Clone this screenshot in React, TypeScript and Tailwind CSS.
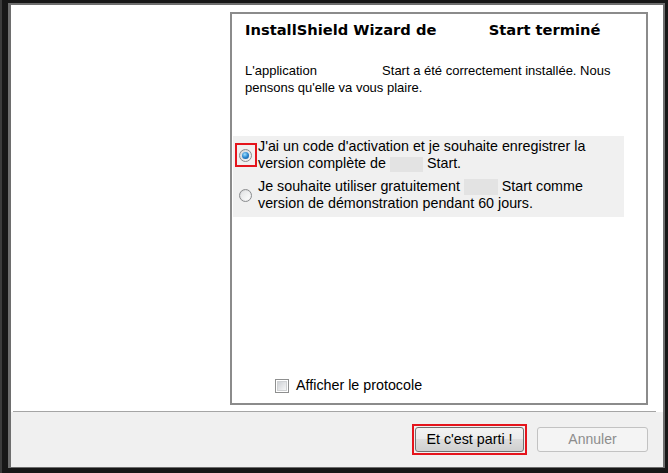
import React from "react";

// ─── Small Win7-style controls ──────────────────────

function Radio({ checked }: { checked?: boolean }) {
  return (
    <div className="flex h-[13px] w-[13px] items-center justify-center rounded-full border border-[#8a8c8e] bg-[linear-gradient(135deg,#d4d6d8,#f7f7f7)]">
      {checked ? (
        <div className="h-[7px] w-[7px] rounded-full bg-[radial-gradient(circle_at_40%_35%,#9fe0ff,#2a86cf_50%,#0c4d8c)]" />
      ) : (
        <div className="h-[9px] w-[9px] rounded-full bg-[linear-gradient(135deg,#e2e3e4,#fdfdfd)]" />
      )}
    </div>
  );
}

function Blank({ w }: { w: string }) {
  return <span className={`inline-block ${w}`} />;
}

export default function App() {
  return (
    <div
      className="flex h-[473px] w-[668px] border-l-2 border-[#3c3c3c] bg-[#171717] pb-[5px] pl-[6px] pr-[3px] pt-[3px] text-[13px] text-black"
      style={{ fontFamily: '"Liberation Sans", Arial, sans-serif' }}
    >
      <div className="flex flex-1 flex-col border-b border-l-[3px] border-r-2 border-t-2 border-[#6e6e6e] bg-white">
        {/* Main area */}
        <div className="flex h-[406px]">
          <div className="w-[219px] shrink-0" />
          <div className="mt-[7px] flex h-[393px] w-[418px] shrink-0 flex-col border-2 border-[#8b8b8b]">
            <div className="mt-[6px] pl-[13px] font-['DejaVu_Sans',sans-serif] text-[14.7px] font-bold leading-[20px]">
              InstallShield Wizard de <Blank w="w-[42px]" /> Start terminé
            </div>

            <div className="mt-[22px] pl-[13px] leading-[17px]">
              L'application <Blank w="w-[58px]" /> Start a été correctement installée. Nous
              <br />
              pensons qu'elle va vous plaire.
            </div>

            {/* Options */}
            <div className="ml-px mt-[40px] flex w-[391px] flex-col gap-[6px] bg-[#f0f0f0] pb-[5px] pt-[2px] text-[14.3px] leading-[17px]">
              <div className="flex items-center">
                <div className="flex w-[25px] shrink-0 justify-center">
                  <div className="flex h-[24px] w-[22px] items-center justify-center border-2 border-[#e5141c]">
                    <Radio checked />
                  </div>
                </div>
                <div>
                  J'ai un code d'activation et je souhaite enregistrer la
                  <br />
                  version complète de{" "}
                  <span className="inline-block h-[15px] w-[33px] bg-[#e3e3e3] align-middle" />{" "}
                  Start.
                </div>
              </div>
              <div className="flex items-center">
                <div className="flex w-[25px] shrink-0 justify-center">
                  <Radio />
                </div>
                <div>
                  Je souhaite utiliser gratuitement{" "}
                  <span className="inline-block h-[16px] w-[34px] bg-[#e3e3e3] align-middle" />{" "}
                  Start comme
                  <br />
                  version de démonstration pendant 60 jours.
                </div>
              </div>
            </div>

            {/* Log checkbox */}
            <div className="mt-auto flex items-center gap-[7px] pb-[9px] pl-[43px] text-[14.3px] leading-[17px]">
              <div className="flex h-[14px] w-[14px] items-center justify-center border border-[#8e8f8f] bg-white">
                <div className="h-[10px] w-[10px] border border-[#d0d2d4] bg-[linear-gradient(135deg,#cfd2d6,#f6f6f6)]" />
              </div>
              <span>Afficher le protocole</span>
            </div>
          </div>
        </div>

        {/* Footer */}
        <div className="ml-[2px] mr-[7px] h-px bg-[#a5a5a5]" />
        <div className="flex flex-1 items-center justify-end gap-[10px] bg-[#f0f0f0] pr-[15px]">
          <div className="border-2 border-[#e5141c] p-px">
            <button className="flex h-[25px] w-[109px] items-center justify-center rounded-[3px] border border-[#707070] bg-[linear-gradient(#f3f3f3,#ebebeb_50%,#dddddd_50%,#cfcfcf)] text-[14.3px] text-black">
              Et c'est parti !
            </button>
          </div>
          <button className="flex h-[25px] w-[111px] items-center justify-center rounded-[3px] border border-[#c2c2c2] bg-[#f4f4f4] text-[14px] text-[#8d8d8d]">
            Annuler
          </button>
        </div>
      </div>
    </div>
  );
}
